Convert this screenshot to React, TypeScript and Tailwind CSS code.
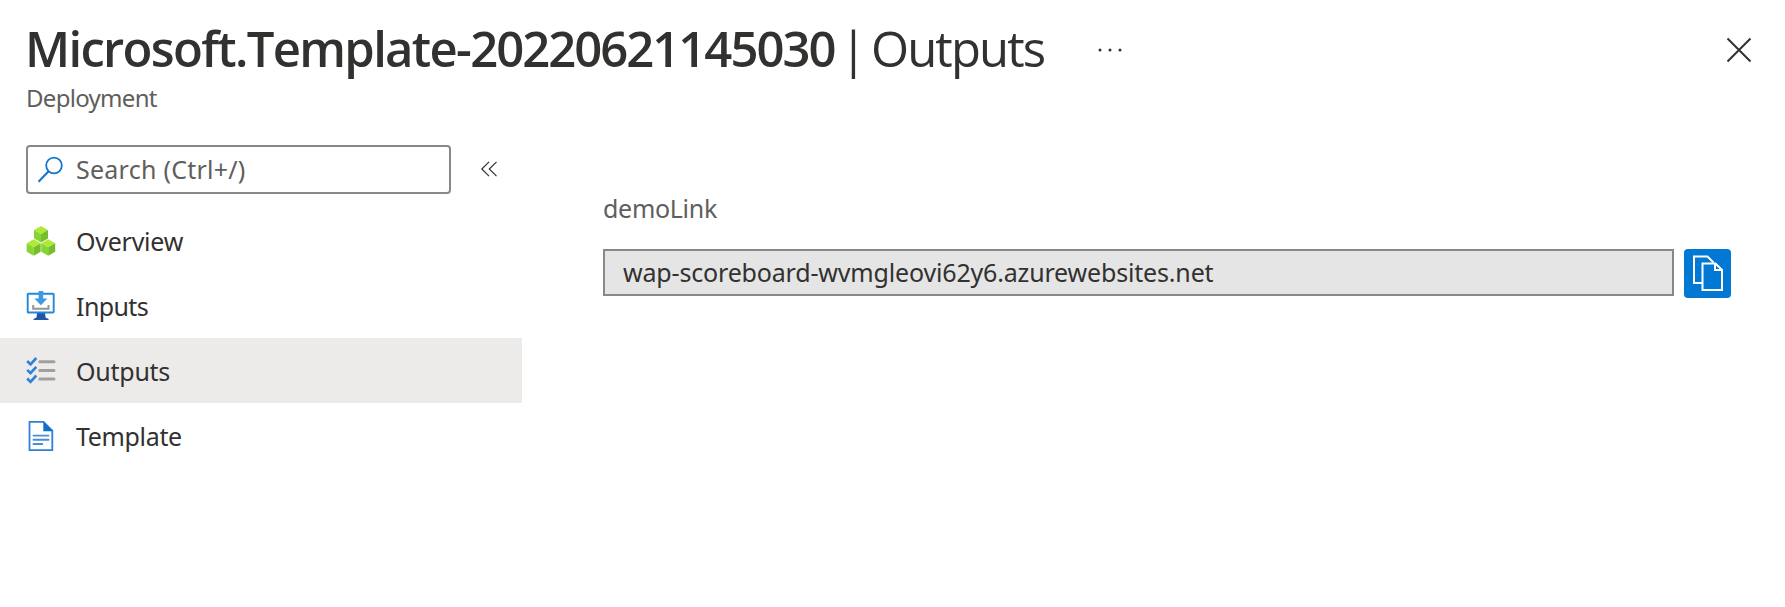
import React from "react";

function SearchIcon() {
  return (
    <svg width="26" height="28" viewBox="0 0 26 28" fill="none" stroke="#1477d1" className="shrink-0">
      <circle cx="16" cy="9.5" r="7.8" strokeWidth="1.8" />
      <path d="M10.6 15.2 .5 25.8" strokeWidth="2.2" />
    </svg>
  );
}

function Cube({ x, y }: { x: number; y: number }) {
  return (
    <g transform={`translate(${x} ${y})`}>
      <path d="M0 4 7 0l7 4-7 4z" fill="#b0e83a" />
      <path d="M0 4 7 8V16.500L0 12.500z" fill="#86d633" />
      <path d="M14 4 7 8V16.500l7-4z" fill="#76bc2d" />
    </g>
  );
}

function CubesIcon() {
  return (
    <svg width="30" height="30" viewBox="0 0 30 30">
      <Cube x={8} y={0} />
      <Cube x={0.7} y={13.3} />
      <Cube x={15.2} y={13.3} />
    </svg>
  );
}

function MonitorIcon() {
  return (
    <svg width="30" height="30" viewBox="0 0 30 30">
      <path d="M11 22h8l.6 4.500 3 1.500v1H7.500v-1l3-1.500z" fill="#1f56a5" />
      <rect x="1.700" y="2.700" width="26" height="18.800" rx=".8" fill="#fff" stroke="#2288d8" strokeWidth="1.900" />
      <path d="M12.600 0h4.600v7.500h4.200l-6.500 6.800-6.500-6.800h4.200z" fill="#3b9ae6" />
      <path d="M7.200 14v3.700h15.300v-3.700" fill="none" stroke="#949494" strokeWidth="2" />
    </svg>
  );
}

function ChecklistIcon() {
  return (
    <svg width="30" height="30" viewBox="0 0 30 30" fill="none">
      <path d="M1.200 5 4.500 8.300 10.300 2M1.200 13.800l3.300 3.300 5.800-6.300M1.200 22.500l3.300 3.300 5.800-6.300" stroke="#2f80d8" strokeWidth="2.600" />
      <path d="M13.800 5.800h14.200M13.800 14.400h14.200M13.800 23h14.200" stroke="#a19f9d" strokeWidth="3" strokeLinecap="round" />
    </svg>
  );
}

function DocumentIcon() {
  return (
    <svg width="30" height="30" viewBox="0 0 30 30" fill="none">
      <path d="M3.500.9h14l8.800 8.700v19.500H3.500z" fill="#fff" stroke="#2f80d8" strokeWidth="1.800" />
      <path d="M17.300.5 27 10.200h-9.700z" fill="#1070c8" />
      <path d="M7.500 14.600h15M7.500 18.800h15M7.500 23h8.800" stroke="#4a8cdc" strokeWidth="1.900" strokeLinecap="round" />
    </svg>
  );
}

const items = [
  { label: "Overview", icon: <CubesIcon />, tracking: "tracking-[-0.25px]" },
  { label: "Inputs", icon: <MonitorIcon />, tracking: "tracking-[-0.6px]" },
  { label: "Outputs", icon: <ChecklistIcon />, tracking: "tracking-[-0.25px]", selected: true },
  { label: "Template", icon: <DocumentIcon />, tracking: "tracking-[-0.35px]" },
];

export default function App() {
  return (
    <div className="flex h-[607px] w-[1785px] flex-col overflow-hidden bg-white font-['Noto_Sans','Open_Sans',sans-serif] text-[#323130]">
      <header className="flex h-[117px] justify-between pl-[26px] pr-[33px] pt-[18px]">
        <div>
          <div className="flex h-[61px] items-center">
            <h1 className="mb-[2px] ml-[-1px] flex font-['Open_Sans','Noto_Sans',sans-serif] text-[49px] leading-[60px]">
              <span className="w-[815px] whitespace-nowrap font-semibold tracking-[-1.680px]">
                Microsoft.Template-<span className="tracking-[-2px]">20220621145030</span>
              </span>
              <span className="w-[31px]">|</span>
              <span className="w-[176px] tracking-[-1.900px]">Outputs</span>
            </h1>
            <svg width="26" height="6" viewBox="0 0 26 6" fill="#323130" className="mt-[2px] ml-[50px]">
              <circle cx="3" cy="3" r="1.500" />
              <circle cx="13" cy="3" r="1.500" />
              <circle cx="23" cy="3" r="1.500" />
            </svg>
          </div>
          <p className="text-[24px] leading-[38px] tracking-[-0.700px] text-[#605e5c]">Deployment</p>
        </div>
        <svg width="26" height="26" viewBox="0 0 26 26" stroke="#323130" strokeWidth="2" className="mt-[19px]">
          <path d="M1.500 1.500l23 23M24.500 1.500l-23 23" />
        </svg>
      </header>
      <div className="flex grow">
        <nav className="w-[522px] pt-[28px]">
          <div className="flex items-center pl-[26px]">
            <div className="flex h-[49px] w-[425px] items-center rounded-[4px] border-2 border-[#8a8886] pl-[10px]">
              <SearchIcon />
              <span className="mb-[2px] ml-[12px] text-[25px] leading-[32px] tracking-[0.250px] text-[#605e5c]">Search (Ctrl+/)</span>
            </div>
            <svg width="18" height="16" viewBox="0 0 18 16" fill="none" stroke="#323130" strokeWidth="1.200" className="mb-[1px] ml-[29px]">
              <path d="M9 .8 1.800 8 9 15.200M16.500.8 9.300 8l7.200 7.200" />
            </svg>
          </div>
          <ul className="mt-[14px]">
            {items.map((item) => (
              <li
                key={item.label}
                className={`flex h-[65px] items-center pl-[26px] ${item.selected ? "bg-[#edebe9]" : ""}`}
              >
                {item.icon}
                <span className={`ml-[20px] text-[25px] leading-[32px] ${item.tracking}`}>{item.label}</span>
              </li>
            ))}
          </ul>
        </nav>
        <main className="grow pl-[81px] pt-[75px]">
          <p className="text-[25px] leading-[32px] tracking-[-0.3px] text-[#605e5c]">demoLink</p>
          <div className="mt-[25px] flex">
            <div className="flex h-[47px] w-[1071px] items-center border-2 border-[#8a8886] bg-[#e5e5e5] pb-[2px] pl-[18px] text-[25px] leading-[32px] tracking-[-0.17px]">
              wap-scoreboard-wvmgleovi62y6.azurewebsites.net
            </div>
            <button className="ml-[10px] flex h-[49px] w-[47px] items-center justify-center rounded-[4px] bg-[#0078d4]">
              <svg width="32" height="37" viewBox="0 0 32 37" fill="none" stroke="#fff" strokeWidth="2">
                <path d="M10 28H2V1.500h13.500l6 6" />
                <path d="M10.500 8.500h13l6.500 6.500v20H10.500zM23 8.500v6.500h7" fill="#0078d4" />
              </svg>
            </button>
          </div>
        </main>
      </div>
    </div>
  );
}
